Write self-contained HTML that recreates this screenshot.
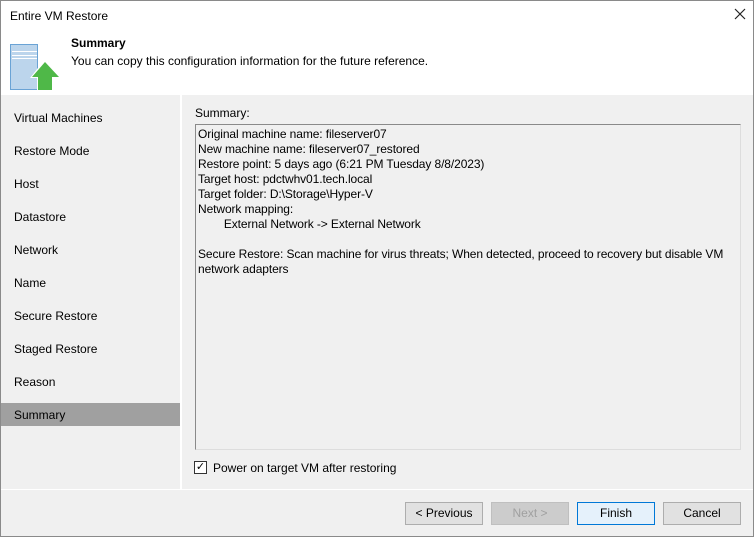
<!DOCTYPE html><html><head><style>
*{margin:0;padding:0;box-sizing:border-box}
body{width:754px;height:537px;overflow:hidden;font-family:"Liberation Sans",sans-serif;font-size:12px;color:#000;background:#fff}
.win{position:absolute;left:0;top:0;width:754px;height:537px;border:1px solid #8a8a8a;background:#f0f0f0}
.abs{position:absolute}
.nav div{position:absolute;left:13px;font-size:12px}
.btn{position:absolute;top:501px;width:78px;height:23px;border:1px solid #adadad;background:#e1e1e1;text-align:center;line-height:21px;font-size:12px}
</style></head><body><div class="win">
<div class="abs" style="left:0;top:0;width:752px;height:94px;background:#fff"></div>
<div class="abs" style="left:9px;top:8px;font-size:12px">Entire VM Restore</div>
<svg class="abs" style="left:733px;top:7px" width="12" height="12"><path d="M1 1L11 11M11 1L1 11" stroke="#222" stroke-width="1.2"/></svg>
<svg class="abs" style="left:0;top:0" width="70" height="94"><rect x="9.5" y="43.5" width="27" height="45" fill="#bcd5ec" stroke="#6aa3d5"/><line x1="11" y1="50.5" x2="36" y2="50.5" stroke="#fff"/><line x1="11" y1="54.5" x2="36" y2="54.5" stroke="#fff"/><line x1="11" y1="57.5" x2="36" y2="57.5" stroke="#fff"/><polygon points="44,58 29,77 36,77 36,90 52,90 52,77 60,77" fill="#fff"/><polygon points="44,61 31,76 37,76 37,89 51,89 51,76 58,76" fill="#4fb848"/></svg>
<div class="abs" style="left:70px;top:35px;font-weight:bold">Summary</div>
<div class="abs" style="left:70px;top:53px">You can copy this configuration information for the future reference.</div>
<div class="abs" style="left:179px;top:94px;width:2px;height:394px;background:#fff"></div>
<div class="abs" style="left:0;top:488px;width:752px;height:1px;background:#fff"></div>
<div class="abs" style="left:0;top:402px;width:179px;height:23px;background:#a0a0a0"></div>
<div class="nav">
<div style="top:110px">Virtual Machines</div><div style="top:143px">Restore Mode</div><div style="top:176px">Host</div><div style="top:209px">Datastore</div><div style="top:242px">Network</div><div style="top:275px">Name</div><div style="top:308px">Secure Restore</div><div style="top:341px">Staged Restore</div><div style="top:374px">Reason</div><div style="top:407px">Summary</div></div>
<div class="abs" style="left:194px;top:105px">Summary:</div>
<div class="abs" style="left:194px;top:123px;width:546px;height:326px;border:1px solid #8a8a8a;border-right-color:#ddd;border-bottom-color:#ddd;padding:2px 2px;line-height:15px;letter-spacing:-0.1px">Original machine name: fileserver07<br>New machine name: fileserver07_restored<br>Restore point: 5 days ago (6:21 PM Tuesday 8/8/2023)<br>Target host: pdctwhv01.tech.local<br>Target folder: D:\Storage\Hyper-V<br>Network mapping:<br>&nbsp;&nbsp;&nbsp;&nbsp;&nbsp;&nbsp;&nbsp;&nbsp;External Network -&gt; External Network<br><br>Secure Restore: Scan machine for virus threats; When detected, proceed to recovery but disable VM network adapters</div>
<div class="abs" style="left:193px;top:460px;width:13px;height:13px;border:1px solid #333;background:#fff;font-size:11px;line-height:11px;text-align:center">✓</div>
<div class="abs" style="left:212px;top:460px">Power on target VM after restoring</div>
<div class="btn" style="left:404px">&lt; Previous</div>
<div class="btn" style="left:490px;color:#a0a0a0;border-color:#bfbfbf;background:#ccc">Next &gt;</div>
<div class="btn" style="left:576px;border-color:#0078d7;background:#e5f1fb">Finish</div>
<div class="btn" style="left:662px">Cancel</div>
</div></body></html>
